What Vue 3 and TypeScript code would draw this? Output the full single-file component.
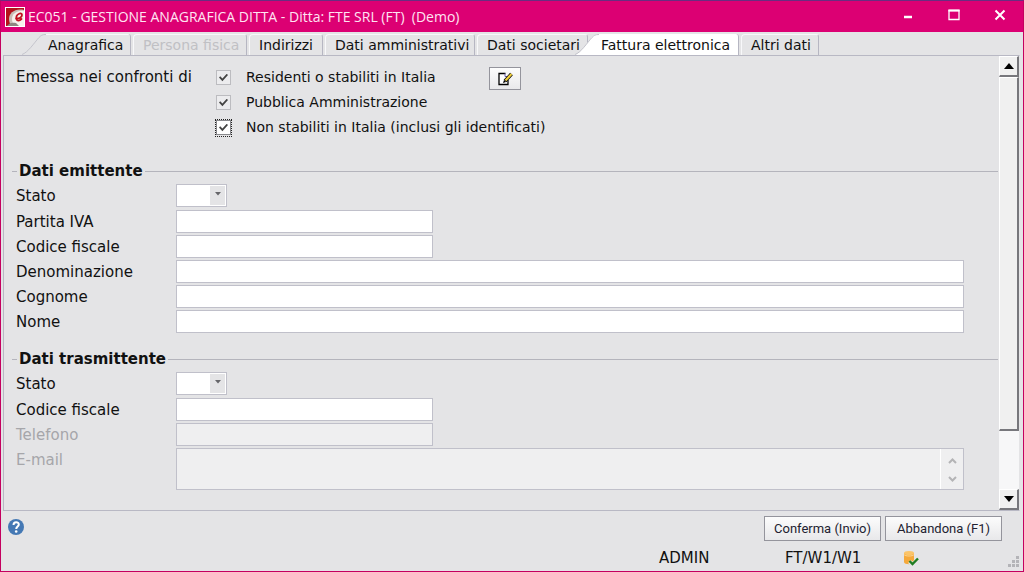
<script setup lang="ts">
import { ref } from 'vue'

interface Tab {
  id: string
  label: string
  disabled?: boolean
}

interface Field {
  id: string
  label: string
  kind: 'select' | 'short' | 'long' | 'area'
  disabled?: boolean
}

interface Section {
  id: string
  title: string
  fields: Field[]
}

const tabs: Tab[] = [
  { id: 'anagrafica', label: 'Anagrafica' },
  { id: 'persona', label: 'Persona fisica', disabled: true },
  { id: 'indirizzi', label: 'Indirizzi' },
  { id: 'amministrativi', label: 'Dati amministrativi' },
  { id: 'societari', label: 'Dati societari' },
  { id: 'fattura', label: 'Fattura elettronica' },
  { id: 'altri', label: 'Altri dati' },
]
const activeTab = ref('fattura')

const recipients = ref([
  { id: 'residenti', label: 'Residenti o stabiliti in Italia', checked: true, locked: true },
  { id: 'pa', label: 'Pubblica Amministrazione', checked: true, locked: true },
  { id: 'esteri', label: 'Non stabiliti in Italia (inclusi gli identificati)', checked: true, locked: false },
])

const sections: Section[] = [
  {
    id: 'emittente',
    title: 'Dati emittente',
    fields: [
      { id: 'e-stato', label: 'Stato', kind: 'select' },
      { id: 'e-piva', label: 'Partita IVA', kind: 'short' },
      { id: 'e-cf', label: 'Codice fiscale', kind: 'short' },
      { id: 'e-den', label: 'Denominazione', kind: 'long' },
      { id: 'e-cognome', label: 'Cognome', kind: 'long' },
      { id: 'e-nome', label: 'Nome', kind: 'long' },
    ],
  },
  {
    id: 'trasmittente',
    title: 'Dati trasmittente',
    fields: [
      { id: 't-stato', label: 'Stato', kind: 'select' },
      { id: 't-cf', label: 'Codice fiscale', kind: 'short' },
      { id: 't-tel', label: 'Telefono', kind: 'short', disabled: true },
      { id: 't-mail', label: 'E-mail', kind: 'area', disabled: true },
    ],
  },
]

const values = ref<Record<string, string>>({})
</script>

<template>
  <div class="window">
    <header class="titlebar">
      <svg class="logo" viewBox="0 0 20 20" aria-hidden="true">
        <rect width="20" height="20" fill="#fff" />
        <rect x="1" y="1" width="18" height="18" fill="#b5121b" />
        <path d="M19 3C10 1 4 6 4 12c0 3 1 5 3 7h12z" fill="#c9bdb5" />
        <path d="M19 4C12 3 7 7 7 12c0 3 1 5 4 7h8z" fill="#f6f1ec" />
        <path d="M2 19c2-3 5-4 9-3l3 3z" fill="#8d8580" />
        <path d="M11 11.500c3 .2 6-1 6-3.500 0-1.500-1.500-2-3-1.200-2 1-3 3.400-2.500 5.400.6 2 3 1.800 5-.2" fill="none" stroke="#c1121f" stroke-width="1.800" stroke-linecap="round" />
      </svg>
      <h1 class="title">EC051 - GESTIONE ANAGRAFICA DITTA - Ditta: FTE SRL (FT)&nbsp; (Demo)</h1>
      <div class="controls">
        <button type="button" class="control" aria-label="Riduci a icona">
          <svg viewBox="0 0 12 12"><path d="M2 8h8" stroke="#fff" stroke-width="2.500" /></svg>
        </button>
        <button type="button" class="control" aria-label="Ingrandisci">
          <svg viewBox="0 0 12 12"><path d="M1 1.500h10v9H1z" fill="none" stroke="#fff" stroke-width="1.300" /><path d="M.4 1.500h11.200" stroke="#fff" stroke-width="2" /></svg>
        </button>
        <button type="button" class="control" aria-label="Chiudi">
          <svg viewBox="0 0 12 12"><path d="M1.500 1.500l9 9M10.500 1.500l-9 9" stroke="#fff" stroke-width="2" /></svg>
        </button>
      </div>
    </header>

    <nav class="tabs" role="tablist">
      <button
        v-for="tab in tabs"
        :key="tab.id"
        type="button"
        role="tab"
        class="tab"
        :class="['tab-' + tab.id, { active: activeTab === tab.id, slanted: tab.id === 'anagrafica' || activeTab === tab.id }]"
        :aria-selected="activeTab === tab.id"
        :disabled="tab.disabled"
        @click="activeTab = tab.id"
      >
        <svg v-if="tab.id === 'anagrafica' || activeTab === tab.id" class="slope" viewBox="0 0 24 21" aria-hidden="true">
          <path class="slope-fill" d="M0 21C6 19 12 9 17 3c2-2 3-3 7-3v21z" />
          <path class="slope-line" d="M0 20.500C6 18.500 12 9 17 3.500c2-2 3-3 7-3" />
        </svg>
        <span>{{ tab.label }}</span>
      </button>
    </nav>

    <main class="panel">
      <form id="ditta" class="form" @submit.prevent>
        <div class="recipients">
          <span class="caption">Emessa nei confronti di</span>
          <div class="checks">
            <div v-for="r in recipients" :key="r.id" class="check-row">
              <span class="box" :class="{ focused: !r.locked }">
                <input :id="r.id" v-model="r.checked" type="checkbox" :disabled="r.locked" />
              </span>
              <label :for="r.id">{{ r.label }}</label>
            </div>
          </div>
          <button type="button" class="edit" aria-label="Modifica">
            <svg viewBox="0 0 16 16" aria-hidden="true">
              <path d="M2 2.500h7l3 3v8H2z" fill="#fff" />
              <path d="M8.500 2.500H2v11h9V9" fill="none" stroke="#000" stroke-width="1.300" />
              <path d="M8 2.500v3h2" fill="none" stroke="#6b5fa8" />
              <path d="M8 10L14.500 3" stroke="#000" stroke-width="3.600" />
              <path d="M8.500 9.500L14.500 3" stroke="#f0cf3c" stroke-width="2.200" />
              <path d="M6 12l1-3 2 2z" fill="#000" />
            </svg>
          </button>
        </div>

        <section v-for="section in sections" :key="section.id" class="section">
          <h2 class="heading">{{ section.title }}</h2>
          <div v-for="f in section.fields" :key="f.id" class="row" :class="[f.kind, { off: f.disabled }]">
            <label :for="f.id">{{ f.label }}</label>
            <div v-if="f.kind === 'select'" class="combo">
              <select :id="f.id" v-model="values[f.id]">
                <option value=""></option>
                <option value="IT">IT</option>
              </select>
              <span class="drop" aria-hidden="true"><svg viewBox="0 0 6 4"><path d="M0 0h6L3 3.500z" fill="#66666a" /></svg></span>
            </div>
            <div v-else-if="f.kind === 'area'" class="area-box">
              <textarea :id="f.id" v-model="values[f.id]" :disabled="f.disabled"></textarea>
              <span class="area-scroll" aria-hidden="true">
                <svg viewBox="0 0 9 6"><path d="M1 5l3.500-3.500L8 5" /></svg>
                <svg viewBox="0 0 9 6"><path d="M1 1l3.500 3.500L8 1" /></svg>
              </span>
            </div>
            <input v-else :id="f.id" v-model="values[f.id]" type="text" :disabled="f.disabled" />
          </div>
        </section>
      </form>

      <div class="scrollbar">
        <button type="button" class="arrow" aria-label="Scorri in alto">
          <svg viewBox="0 0 10 6"><path d="M5 0l5 6H0z" /></svg>
        </button>
        <div class="track"><div class="thumb"></div></div>
        <button type="button" class="arrow" aria-label="Scorri in basso">
          <svg viewBox="0 0 10 6"><path d="M0 0h10L5 6z" /></svg>
        </button>
      </div>
    </main>

    <footer class="footer">
      <div class="actions">
        <button type="button" class="help" aria-label="Aiuto">
          <svg viewBox="0 0 16 16" aria-hidden="true">
            <circle cx="8" cy="8" r="8" fill="#4478b4" />
            <path d="M5.500 6c0-3.600 5.300-3.500 5.300-.5C10.800 7.500 8.200 7.600 8.200 10" fill="none" stroke="#fff" stroke-width="2" />
            <circle cx="8.200" cy="12.500" r="1.300" fill="#fff" />
          </svg>
        </button>
        <button type="submit" form="ditta" class="push">Conferma (Invio)</button>
        <button type="button" class="push">Abbandona (F1)</button>
      </div>
      <div class="status">
        <span class="user">ADMIN</span>
        <span class="path">FT/W1/W1</span>
        <svg class="db" viewBox="0 0 16 16" aria-hidden="true">
          <path d="M1 3v9c0 3 10 3 10 0V3z" fill="#f5a93b" />
          <ellipse cx="6" cy="3" rx="5" ry="2" fill="#fbc469" />
          <path d="M1 4.500c1 2 9 2 10 0" fill="none" stroke="#fde0a8" stroke-width=".8" />
          <path d="M6.500 11.500l3 3L15 9" fill="none" stroke="#e4e4e6" stroke-width="4" />
          <path d="M6.500 11l3 3L15 8.500" fill="none" stroke="#1f7d22" stroke-width="2.400" />
        </svg>
        <svg class="grip" viewBox="0 0 12 12" aria-hidden="true">
          <path d="M9 0h3v3H9zM5 4h3v3H5zM9 4h3v3H9zM1 8h3v3H1zM5 8h3v3H5zM9 8h3v3H9z" fill="#b4b4b8" />
        </svg>
      </div>
    </footer>
  </div>
</template>

<style>
body {
  background: #e4e4e6;
}
</style>

<style scoped>
* {
  box-sizing: border-box;
}

.window {
  min-height: 100vh;
  display: flex;
  flex-direction: column;
  border: 1px solid #c4005f;
  border-top-color: #6a2c80;
  background: #e4e4e6;
  color: #111;
  font: 15px/25px Verdana, "DejaVu Sans", sans-serif;
}

button,
input,
select,
textarea {
  margin: 0;
  font: inherit;
  color: inherit;
}

button svg {
  display: block;
}

.titlebar {
  display: flex;
  align-items: center;
  height: 31px;
  padding-left: 4px;
  background: #dc0073;
}

.logo {
  width: 20px;
  height: 20px;
  margin-right: 3px;
}

.title {
  flex: 1;
  margin: 0;
  color: #ffe4f2;
  font: 14px/20px "Segoe UI", "Open Sans", sans-serif;
  white-space: nowrap;
}

.controls {
  display: flex;
  height: 28px;
  margin-bottom: 3px;
}

.control {
  display: grid;
  place-items: center;
  width: 46px;
  height: 28px;
  padding: 0;
  border: 0;
  background: none;
}

.control svg {
  width: 12px;
  height: 12px;
}

.tabs {
  display: flex;
  align-items: flex-end;
  gap: 2px;
  height: 23px;
  padding-left: 21px;
  font-size: 14px;
}

.tab {
  position: relative;
  height: 21px;
  padding: 0 0 0 9px;
  border: 1px solid #f8f8fa;
  border-right-color: #b6b6c2;
  border-bottom: 0;
  border-radius: 4px 3px 0 0;
  background: #e4e4e6;
  line-height: 20px;
  text-align: left;
  white-space: nowrap;
}

.tab:disabled {
  color: #c0c0c4;
}

.tab.slanted {
  padding-left: 26px;
  border-left: 0;
  border-top: 0;
  background: linear-gradient(#f8f8fa, #f8f8fa) 24px 0 / 100% 1px no-repeat;
}

.tab.slanted.active {
  z-index: 1;
  margin-left: -15px;
  background: linear-gradient(#fff, #fff) 24px 0 / 100% 100% no-repeat;
}

.tab.slanted span {
  position: relative;
}

.slope {
  position: absolute;
  left: 0;
  top: 0;
  width: 24px;
  height: 21px;
}

.slope-fill {
  fill: #e4e4e6;
}

.active .slope-fill {
  fill: #fff;
}

.slope-line {
  fill: none;
  stroke: #c4c4cc;
}

.tab-anagrafica { width: 109px; }
.tab-persona { width: 114px; }
.tab-indirizzi { width: 74px; }
.tab-amministrativi { width: 150px; }
.tab-societari { width: 111px; }
.tab-fattura { width: 164px; }
.tab-altri { width: 78px; }

.panel {
  flex: 1;
  display: flex;
  margin: 0 3px 0 2px;
  border: 1px solid #b8b8c4;
  border-right-color: #e4e4e6;
}

.form {
  flex: 1;
  min-width: 0;
  padding: 9px 1px 4px 8px;
}

.recipients {
  display: flex;
  padding-left: 4px;
  margin-bottom: 19px;
}

.caption {
  width: 199px;
}

.check-row {
  display: flex;
  align-items: center;
  height: 25px;
}

.checks {
  width: 274px;
  font-size: 14px;
  white-space: nowrap;
}

.box {
  flex: none;
  display: grid;
  place-items: center;
  width: 17px;
  height: 18px;
  margin-right: 14px;
}

.box.focused {
  border: 1px dotted #222;
}

.box input {
  appearance: none;
  display: grid;
  place-items: center;
  width: 15px;
  height: 15px;
  border: 1px solid #bcbcc0;
  background: #ececee;
}

.box.focused input {
  border-color: #88888c;
  background: #fff;
}

.box input:checked::before {
  content: "";
  width: 9px;
  height: 8px;
  background: #444;
  clip-path: polygon(0 50%, 14% 34%, 38% 62%, 86% 4%, 100% 20%, 38% 96%);
}

.edit {
  display: grid;
  place-items: center;
  width: 32px;
  height: 23px;
  margin-top: 2px;
  padding: 0;
  border: 1px solid #94949c;
  background: linear-gradient(#fdfdfd, #e9e9eb);
}

.edit svg {
  width: 16px;
  height: 16px;
}

.section {
  margin-bottom: 14px;
}

.heading {
  display: flex;
  align-items: center;
  gap: 2px;
  height: 24px;
  margin: 0 0 1px;
  font-size: 15px;
  font-weight: bold;
  line-height: 24px;
}

.heading::before,
.heading::after {
  content: "";
  width: 5px;
  height: 1px;
  background: #b4b4bc;
}

.heading::after {
  flex: 1;
}

.row {
  display: grid;
  grid-template-columns: 160px minmax(0, 1fr);
  height: 23px;
  margin-bottom: 2px;
  padding: 0 34px 0 4px;
}

.row.select {
  margin-bottom: 3px;
}

.row.area {
  height: 42px;
}

.row.off {
  color: #a6a6aa;
}

.row input {
  width: 100%;
  height: 23px;
  padding: 0 4px;
  border: 1px solid #c0c0ca;
  border-radius: 0;
  background: #fff;
}

.row.short input {
  width: 257px;
}

.row input:disabled {
  background: #efeff0;
}

.combo {
  position: relative;
  width: 51px;
  height: 23px;
}

.combo select {
  appearance: none;
  display: block;
  width: 100%;
  height: 100%;
  padding: 0 4px;
  border: 1px solid #c0c0ca;
  border-radius: 0;
  background: #fff;
}

.drop {
  position: absolute;
  top: 2px;
  right: 2px;
  bottom: 2px;
  width: 15px;
  background: #e4e4e6;
  pointer-events: none;
}

.drop svg {
  display: block;
  width: 6px;
  height: 4px;
  margin: 6px auto 0;
}

.area-box {
  display: flex;
  height: 42px;
  border: 1px solid #c0c0ca;
  background: #efeff0;
}

.area-box textarea {
  flex: 1;
  min-width: 0;
  padding: 2px 4px;
  border: 0;
  background: none;
  resize: none;
}

.area-scroll {
  display: flex;
  flex-direction: column;
  justify-content: space-between;
  align-items: center;
  width: 23px;
  padding: 9px 0 7px;
  border-left: 1px solid #fff;
}

.area-scroll svg {
  width: 9px;
  height: 6px;
  fill: none;
  stroke: #b4b4b6;
  stroke-width: 2;
}

.scrollbar {
  display: flex;
  flex-direction: column;
  width: 20px;
}

.arrow {
  display: grid;
  place-items: center;
  height: 21px;
  padding: 0;
  border: 1px solid #fff;
  border-right: 2px solid #77777c;
  border-bottom: 2px solid #77777c;
  background: #f0f0f0;
}

.arrow svg {
  width: 10px;
  height: 6px;
}

.track {
  flex: 1;
  background: #f7f7f8;
}

.thumb {
  height: 86%;
  border: 1px solid #fff;
  border-right: 2px solid #77777c;
  border-bottom: 2px solid #77777c;
  background: #f0f0f0;
}

.footer {
  padding: 5px 4px 0 7px;
}

.actions {
  display: flex;
  gap: 4px;
  padding-right: 17px;
}

.help {
  width: 16px;
  height: 16px;
  margin: 3px auto 0 0;
  padding: 0;
  border: 0;
  background: none;
}

.push {
  width: 117px;
  height: 25px;
  padding: 0;
  border: 1px solid #94949c;
  background: linear-gradient(#fcfcfc, #e8e8ea);
  color: #222230;
  font: 13px/20px Roboto, "Liberation Sans", sans-serif;
}

.status {
  display: flex;
  justify-content: flex-end;
  align-items: center;
  height: 30px;
  padding-top: 4px;
}

.user {
  width: 126px;
}

.path {
  width: 118px;
}

.db {
  width: 16px;
  height: 16px;
  margin-right: 88px;
}

.grip {
  width: 12px;
  height: 12px;
  margin-top: 8px;
}
</style>
